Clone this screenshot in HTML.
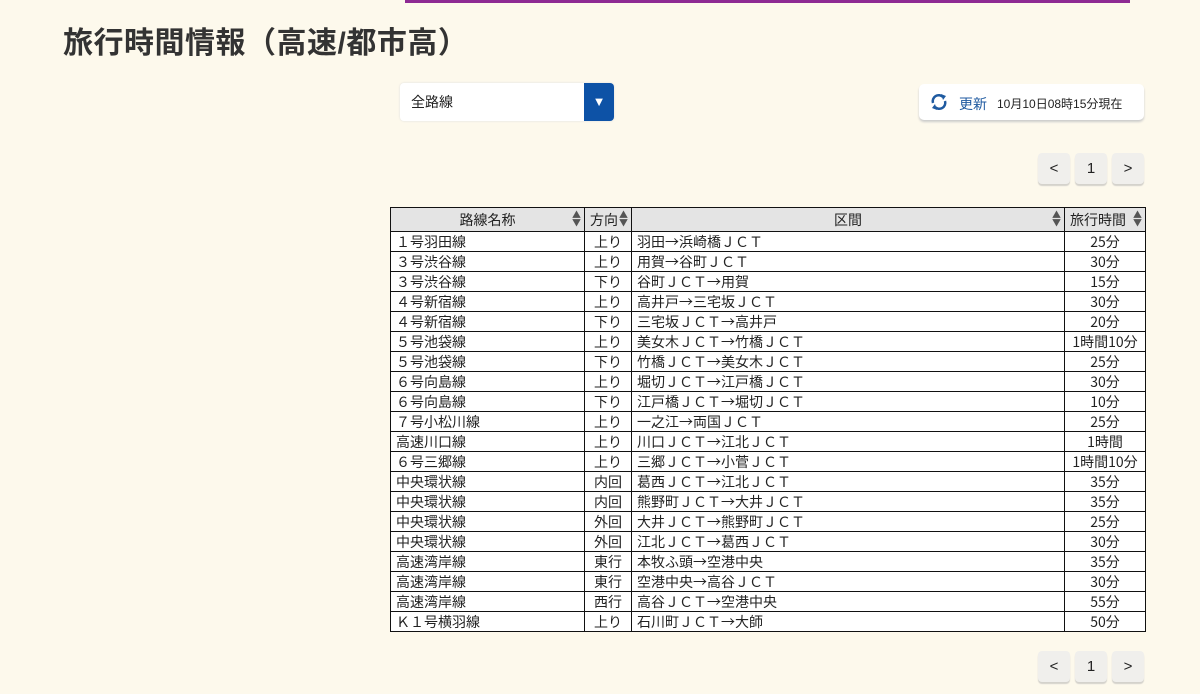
<!DOCTYPE html>
<html><head><meta charset="utf-8"><style>
body{margin:0;background:#fdf9ec;font-family:"Liberation Sans","Noto Sans CJK JP",sans-serif;width:1200px;height:694px;overflow:hidden;position:relative;color:#222}
.bar{position:absolute;left:405px;top:0;width:725px;height:3px;background:#8e2a93}
h1{position:absolute;left:63px;top:18px;margin:0;font-size:30px;font-weight:bold;color:#333;letter-spacing:0.5px}
.sel{position:absolute;left:400px;top:83px;width:214px;height:38px;background:#fff;border-radius:4px;box-shadow:0 0 2px #ddd}
.sel span{position:absolute;left:11px;top:9px;font-size:14px}
.sel b{position:absolute;right:0;top:0;width:30px;height:38px;background:#0d52a6;border-radius:0 4px 4px 0;color:#fff;font-size:13px;text-align:center;line-height:38px}
.upd{position:absolute;left:919px;top:84px;width:225px;height:36px;background:#fff;border-radius:5px;box-shadow:0 2px 2px #ccc}
.upd svg{position:absolute;left:10px;top:8px}
.upd .a{position:absolute;left:40px;top:10px;font-size:14px;color:#1f5aa0}
.upd .b{position:absolute;left:78px;top:11px;font-size:12px}
.pg{position:absolute;width:32px;height:31px;background:#f0efec;border-radius:4px;box-shadow:0 2px 1px #d4d2cc;text-align:center;line-height:31px;font-size:15px}
table{position:absolute;left:390px;top:207px;border-collapse:collapse;font-size:14px;background:#fff;font-family:"Noto Sans CJK JP",sans-serif}
td,th{border:1px solid #111;height:19px;padding:0 5px;line-height:18px;white-space:nowrap}
th{background:#e4e4e4;font-weight:normal;height:23px;position:relative}
th i{position:absolute;right:3px;top:3px;font-style:normal;font-size:9px;line-height:8px;color:#555}
.c{text-align:center}
</style></head><body>
<div class="bar"></div>
<h1>旅行時間情報（高速/都市高）</h1>
<div class="sel"><span>全路線</span><b>▼</b></div>
<div class="upd"><svg width="20" height="20" viewBox="0 0 20 20"><path d="M4 11A6 6 0 0 1 14 5" fill="none" stroke="#1f5aa0" stroke-width="2.5"/><path d="M12 2l5 2-3 4z" fill="#1f5aa0"/><path d="M16 9A6 6 0 0 1 6 15" fill="none" stroke="#1f5aa0" stroke-width="2.5"/><path d="M8 18l-5-2 3-4z" fill="#1f5aa0"/></svg><span class="a">更新</span><span class="b">10月10日08時15分現在</span></div>
<div class="pg" style="left:1038px;top:153px">&lt;</div><div class="pg" style="left:1075px;top:153px">1</div><div class="pg" style="left:1112px;top:153px">&gt;</div>
<div class="pg" style="left:1038px;top:651px">&lt;</div><div class="pg" style="left:1075px;top:651px">1</div><div class="pg" style="left:1112px;top:651px">&gt;</div>
<table>
<tr><th style="width:183px">路線名称<i>▲<br>▼</i></th><th style="width:36px;text-align:left">方向<i>▲<br>▼</i></th><th style="width:422px">区間<i>▲<br>▼</i></th><th style="width:70px;text-align:left">旅行時間<i>▲<br>▼</i></th></tr>
<tr><td>１号羽田線</td><td class="c">上り</td><td>羽田→浜崎橋ＪＣＴ</td><td class="c">25分</td></tr>
<tr><td>３号渋谷線</td><td class="c">上り</td><td>用賀→谷町ＪＣＴ</td><td class="c">30分</td></tr>
<tr><td>３号渋谷線</td><td class="c">下り</td><td>谷町ＪＣＴ→用賀</td><td class="c">15分</td></tr>
<tr><td>４号新宿線</td><td class="c">上り</td><td>高井戸→三宅坂ＪＣＴ</td><td class="c">30分</td></tr>
<tr><td>４号新宿線</td><td class="c">下り</td><td>三宅坂ＪＣＴ→高井戸</td><td class="c">20分</td></tr>
<tr><td>５号池袋線</td><td class="c">上り</td><td>美女木ＪＣＴ→竹橋ＪＣＴ</td><td class="c">1時間10分</td></tr>
<tr><td>５号池袋線</td><td class="c">下り</td><td>竹橋ＪＣＴ→美女木ＪＣＴ</td><td class="c">25分</td></tr>
<tr><td>６号向島線</td><td class="c">上り</td><td>堀切ＪＣＴ→江戸橋ＪＣＴ</td><td class="c">30分</td></tr>
<tr><td>６号向島線</td><td class="c">下り</td><td>江戸橋ＪＣＴ→堀切ＪＣＴ</td><td class="c">10分</td></tr>
<tr><td>７号小松川線</td><td class="c">上り</td><td>一之江→両国ＪＣＴ</td><td class="c">25分</td></tr>
<tr><td>高速川口線</td><td class="c">上り</td><td>川口ＪＣＴ→江北ＪＣＴ</td><td class="c">1時間</td></tr>
<tr><td>６号三郷線</td><td class="c">上り</td><td>三郷ＪＣＴ→小菅ＪＣＴ</td><td class="c">1時間10分</td></tr>
<tr><td>中央環状線</td><td class="c">内回</td><td>葛西ＪＣＴ→江北ＪＣＴ</td><td class="c">35分</td></tr>
<tr><td>中央環状線</td><td class="c">内回</td><td>熊野町ＪＣＴ→大井ＪＣＴ</td><td class="c">35分</td></tr>
<tr><td>中央環状線</td><td class="c">外回</td><td>大井ＪＣＴ→熊野町ＪＣＴ</td><td class="c">25分</td></tr>
<tr><td>中央環状線</td><td class="c">外回</td><td>江北ＪＣＴ→葛西ＪＣＴ</td><td class="c">30分</td></tr>
<tr><td>高速湾岸線</td><td class="c">東行</td><td>本牧ふ頭→空港中央</td><td class="c">35分</td></tr>
<tr><td>高速湾岸線</td><td class="c">東行</td><td>空港中央→高谷ＪＣＴ</td><td class="c">30分</td></tr>
<tr><td>高速湾岸線</td><td class="c">西行</td><td>高谷ＪＣＴ→空港中央</td><td class="c">55分</td></tr>
<tr><td>Ｋ１号横羽線</td><td class="c">上り</td><td>石川町ＪＣＴ→大師</td><td class="c">50分</td></tr>
</table>
</body></html>
